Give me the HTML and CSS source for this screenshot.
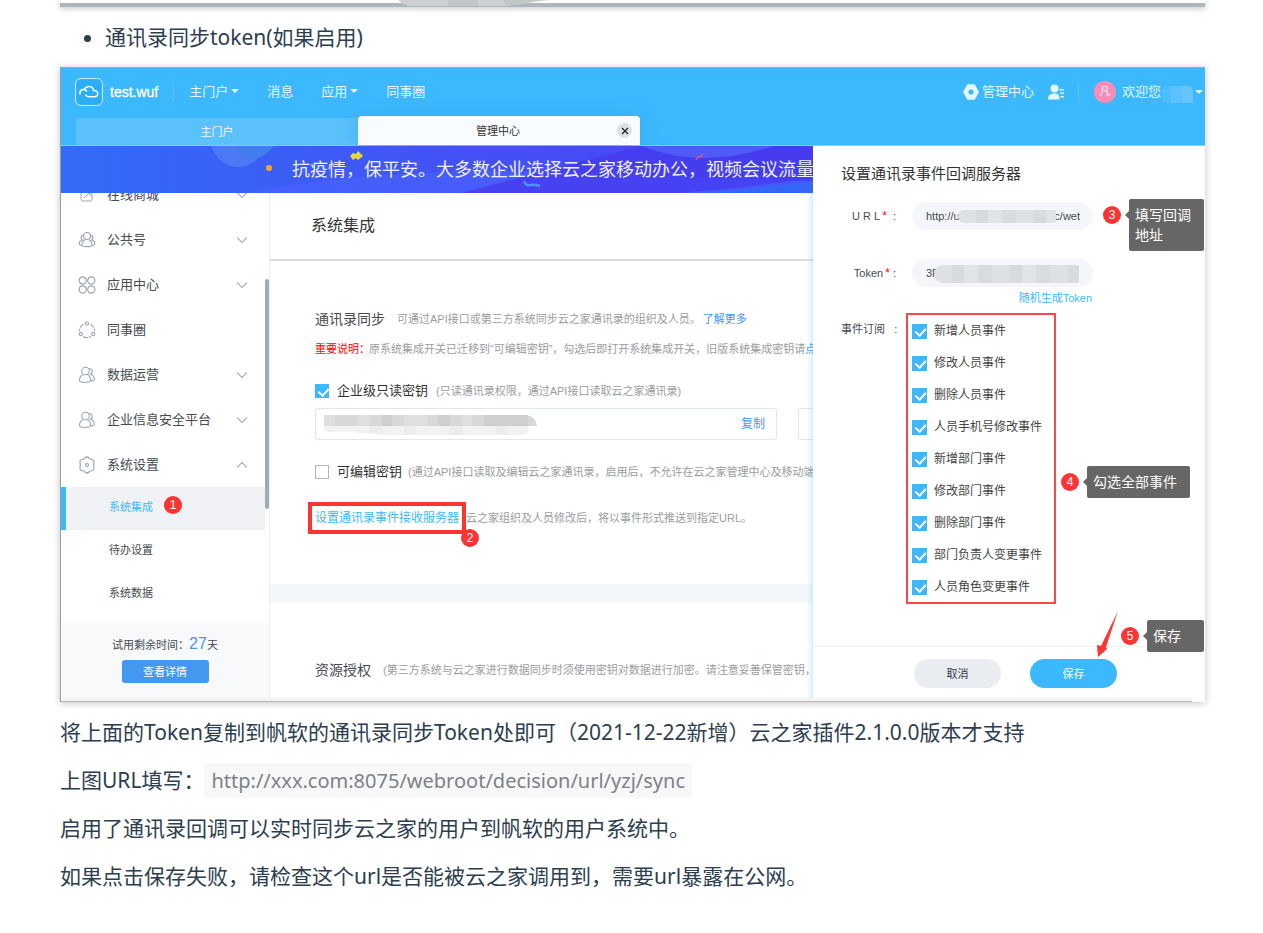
FILE: index.html
```html
<!DOCTYPE html>
<html lang="zh-CN">
<head>
<meta charset="utf-8">
<title>通讯录同步</title>
<link rel="stylesheet" href="styles.css">
</head>
<body>
<svg class="defs" width="0" height="0" aria-hidden="true">
  <symbol id="chevron" viewBox="0 0 12 8"><path d="M1 1.5 6 6.5 11 1.5" fill="none" stroke="#a9b1bb" stroke-width="1.1"/></symbol>
  <symbol id="people2" viewBox="0 0 18 18"><g fill="none" stroke="#9aa5b3" stroke-width="1.1"><circle cx="7.5" cy="5" r="3.8"/><path d="M5.5 8.5C2.500 9.500 1.500 12 1.500 14.500 1.500 16 4 16.300 7 16.300s5.600-.3 5.600-1.800c0-2.500-1-5-3.500-6"/><path d="M11 2.500c3.500-.3 4.500 4 1.500 5.800 2.500.7 3.800 3 3.800 5 0 1.200-1.200 1.500-3.300 1.600"/></g></symbol>
</svg>
<main class="doc">
  <div class="prev-shot">
    <svg class="prev-mosaic" viewBox="0 0 152 7" width="152" height="7" aria-hidden="true"><path d="M0 0Q6 6 14 6H108L151 0Z" fill="#cdd1d3"/><path d="M50 0H80V6H50ZM105 0H140L108 6Z" fill="#c2c6c8"/></svg>
  </div>
  <ul class="points"><li>通讯录同步token(如果启用)</li></ul>

  <section class="shot">
    <header class="top">
      <div class="bar">
        <svg class="logo" viewBox="0 0 28 28" width="28" height="28" aria-hidden="true"><rect x=".6" y=".6" width="26.800" height="26.800" rx="5" fill="#2badf8" stroke="#d4efff"/><path d="M5 16C4 11.500 9 10 11.500 13M9.500 11.500C11 7 18 7.500 18.500 12.500 24 12 24 18.800 19.500 18.800H14.500Q12 18.800 10.500 17" fill="none" stroke="#fff" stroke-width="1.500" stroke-linecap="round"/></svg>
        <strong class="brand">test.wuf</strong>
        <nav class="menu">
          <a class="caret" href="#">主门户</a>
          <a href="#">消息</a>
          <a class="caret" href="#">应用</a>
          <a href="#">同事圈</a>
        </nav>
        <div class="account">
          <a class="admin" href="#"><svg viewBox="0 0 16 16" width="16" height="16" aria-hidden="true"><path d="M4.500.8h7L15.500 8l-4 7.200h-7L.5 8Z" fill="#e4f5ff" stroke="#e4f5ff" stroke-linejoin="round"/><circle cx="8" cy="8" r="2.600" fill="#3cb8ff"/></svg>管理中心</a>
          <svg class="contact" viewBox="0 0 16 16" width="16" height="16" aria-hidden="true"><g fill="#e4f5ff"><circle cx="6.500" cy="4.500" r="4"/><path d="M0 15.500c0-4 2-6 6.500-6s5 2 5 6ZM11.500 5H16v1.500H11.500ZM12 8.500h4V10H12ZM12.500 12h3.500v1.500H12.500Z"/></g></svg>
          <span class="avatar">凡</span>
          <span class="hello">欢迎您</span>
          <span class="masked-name"></span>
        </div>
      </div>
      <div class="tabs">
        <div class="tab">主门户</div>
        <div class="tab active">管理中心<button class="close" type="button" aria-label="关闭"><svg viewBox="0 0 8 8" width="8" height="8" aria-hidden="true"><path d="M1 1 7 7M7 1 1 7" stroke="#222" stroke-width="1.300"/></svg></button></div>
      </div>
    </header>

    <div class="below">
      <div class="left">
        <div class="banner">
          <svg class="banner-art" viewBox="0 0 753 47" width="753" height="47" preserveAspectRatio="xMinYMin slice" aria-hidden="true">
            <path d="M180 47Q330 20 500 26T753 35V47Z" fill="#4a64ff" opacity=".6"/>
            <path d="M400 47Q560 60 753 32V0H580Z" fill="#4638ee" opacity=".7"/>
            <path d="M580 0Q640 24 712 0Z" fill="#4c5cf4"/><path d="M640 47Q700 42 753 35V47Z" fill="#3566f5"/>
            <circle cx="177" cy="-6" r="27" fill="#4c79f5"/><path d="M175 0q18 24 38 0Z" fill="#3f7df0"/>
            <circle cx="208" cy="22" r="3" fill="#f5a52a"/><path d="m289 10 3-3 3 1 2-3 5 5-5 4-2-2-3 2Z" fill="#e5d83b"/>
            <path d="M463 35q2 5 6 4t10 1" fill="none" stroke="#4c93fb" stroke-width="2.500"/><path d="M635 14q1-3 3-3t3-1V8" fill="none" stroke="#ea4e8b" stroke-width="1.500"/>
          </svg>
          <p class="slogan">抗疫情，保平安。大多数企业选择云之家移动办公，视频会议流量</p>
        </div>
        <div class="workspace">
          <aside class="side">
            <nav class="side-nav">
              <a class="row" href="#"><svg class="ico" viewBox="0 0 18 18" width="18" height="18"><rect x="3" y="2" width="11" height="13" rx="1.500" fill="none" stroke="#9aa5b3"/><path d="m6 12 6-6M8 6h4v4" fill="none" stroke="#9aa5b3"/></svg>在线商城<svg class="chev" width="12" height="8"><use href="#chevron"/></svg></a>
              <a class="row" href="#"><svg class="ico" viewBox="0 0 18 18" width="18" height="18"><g fill="none" stroke="#9aa5b3" stroke-width="1.100"><circle cx="9" cy="5" r="3.500"/><path d="M5.500 4C2.500 4 2.500 8 4.500 9 1.500 10 1 12 1.500 13.500c.5 1 2 1 3 1M12.500 4c3 0 3 4 1 5 3 1 3.500 3 3 4.500-.5 1-2 1-3 1M7 9c-2 .8-3 3-3 5.500C4 16 14 16 14 14.500 14 12 13 9.800 11 9"/></g></svg>公共号<svg class="chev" width="12" height="8"><use href="#chevron"/></svg></a>
              <a class="row" href="#"><svg class="ico" viewBox="0 0 18 18" width="18" height="18"><g fill="none" stroke="#9aa5b3" stroke-width="1.200"><circle cx="4.700" cy="4.500" r="3.600"/><circle cx="13.300" cy="4.500" r="3.600"/><circle cx="4.700" cy="13.500" r="3.600"/><circle cx="13.300" cy="13.500" r="3.600"/></g></svg>应用中心<svg class="chev" width="12" height="8"><use href="#chevron"/></svg></a>
              <a class="row" href="#"><svg class="ico" viewBox="0 0 18 18" width="18" height="18"><g fill="none" stroke="#9aa5b3" stroke-width="1.100"><circle cx="9" cy="2.600" r="1.600"/><circle cx="2.800" cy="13" r="1.600"/><circle cx="15.200" cy="13" r="1.600"/><path d="M5.500 3.200Q1.500 5.500 1.500 10M12.500 3.200Q16.500 5.500 16.500 10M5 15.500Q9 17.800 13 15.500" stroke-dasharray="5 1"/></g></svg>同事圈</a>
              <a class="row" href="#"><svg class="ico" width="18" height="18"><use href="#people2"/></svg>数据运营<svg class="chev" width="12" height="8"><use href="#chevron"/></svg></a>
              <a class="row" href="#"><svg class="ico" width="18" height="18"><use href="#people2"/></svg>企业信息安全平台<svg class="chev" width="12" height="8"><use href="#chevron"/></svg></a>
              <a class="row" href="#"><svg class="ico" viewBox="0 0 18 18" width="18" height="18"><g fill="none" stroke="#9aa5b3" stroke-width="1.200"><path d="M7 2q2-2 4 0 1 1.500 3 1.200Q16.500 4 16 6.500q-.5 2.500 0 5 .5 2.500-2 3.300-2-.3-3 1.200-2 2-4 0-1-1.500-3-1.200-2.500-.8-2-3.300.5-2.500 0-5Q1.500 4 4 3.200 6 3.500 7 2Z"/><circle cx="9" cy="9" r="1.500"/></g></svg>系统设置<svg class="chev up" width="12" height="8"><use href="#chevron"/></svg></a>
              <a class="sub current" href="#">系统集成 <span class="num">1</span></a>
              <a class="sub" href="#">待办设置</a>
              <a class="sub" href="#">系统数据</a>
            </nav>
            <div class="trial">
              <p class="trial-text">试用剩余时间：<b>27</b>天</p>
              <button class="detail" type="button">查看详情</button>
            </div>
            <span class="scroll"></span>
          </aside>

          <div class="content">
            <h2 class="title">系统集成</h2>
            <div class="panel">
              <p class="line intro"><span class="heading">通讯录同步</span><span class="note">可通过API接口或第三方系统同步云之家通讯录的组织及人员。</span><a href="#">了解更多</a></p>
              <p class="line warn"><b>重要说明：</b><span class="note">原系统集成开关已迁移到“可编辑密钥”，勾选后即打开系统集成开关，旧版系统集成密钥请</span><a href="#">点</a></p>
              <div class="line key"><label class="check"><input type="checkbox" checked>企业级只读密钥</label><span class="note">(只读通讯录权限，通过API接口读取云之家通讯录)</span></div>
              <div class="keys">
                <div class="keybox">
                  <svg viewBox="0 0 216 22" width="216" height="22" aria-hidden="true"><g opacity=".9"><path d="M2 2H205Q214 4 215 13H2Z" fill="#d4d4d4"/><path d="M1 13H207V18Q205 22 198 22H60L30 19H6Q1 18 1 13Z" fill="#f1f1f1"/><path d="M2 2H13V13H2ZM36 2H48V13H36ZM82 2H105V13H82ZM140 2H150V13H140Z" fill="#dcdcdc"/><path d="M60 2H70V13H60ZM116 2H128V13H116ZM162 2H206V13H162Z" fill="#cacaca"/><path d="M48 13H60V20H48ZM82 13H94V22H82ZM128 13H140V22H128ZM174 13H186V22H174Z" fill="#ebebeb"/></g></svg>
                  <button class="copy" type="button">复制</button>
                </div>
                <div class="keybox next"></div>
              </div>
              <div class="line edit"><label class="check"><input type="checkbox">可编辑密钥</label><span class="note">(通过API接口读取及编辑云之家通讯录，启用后，不允许在云之家管理中心及移动端</span></div>
              <p class="line server"><span class="marked"><a href="#">设置通讯录事件接收服务器</a><span class="num corner">2</span></span><span class="note">云之家组织及人员修改后，将以事件形式推送到指定URL。</span></p>
            </div>
            <div class="panel auth">
              <p class="line intro"><span class="heading">资源授权</span><span class="note">(第三方系统与云之家进行数据同步时须使用密钥对数据进行加密。请注意妥善保管密钥，</span></p>
            </div>
          </div>
        </div>
      </div>

      <form class="drawer">
        <h3>设置通讯录事件回调服务器</h3>
        <div class="field">
          <label for="url">U R L<i>*</i>&nbsp; :</label>
          <div class="pill"><input id="url" type="text" value="http://u&nbsp;&nbsp;&nbsp;&nbsp;&nbsp;&nbsp;&nbsp;&nbsp;&nbsp;&nbsp;&nbsp;&nbsp;&nbsp;&nbsp;&nbsp;&nbsp;&nbsp;&nbsp;&nbsp;&nbsp;&nbsp;&nbsp;&nbsp;&nbsp;&nbsp;&nbsp;&nbsp;&nbsp;&nbsp;&nbsp;&nbsp;c/wet"><span class="mask short"></span></div>
          <div class="callout"><span class="num">3</span><span class="tip">填写回调地址</span></div>
        </div>
        <div class="field token">
          <label for="token">Token<i>*</i> :</label>
          <div class="pill"><input id="token" type="text" value="3F"><span class="mask"></span></div>
        </div>
        <a class="random" href="#">随机生成Token</a>
        <fieldset class="events">
          <legend>事件订阅 &nbsp; :</legend>
          <div class="list">
            <label class="check"><input type="checkbox" checked>新增人员事件</label>
            <label class="check"><input type="checkbox" checked>修改人员事件</label>
            <label class="check"><input type="checkbox" checked>删除人员事件</label>
            <label class="check"><input type="checkbox" checked>人员手机号修改事件</label>
            <label class="check"><input type="checkbox" checked>新增部门事件</label>
            <label class="check"><input type="checkbox" checked>修改部门事件</label>
            <label class="check"><input type="checkbox" checked>删除部门事件</label>
            <label class="check"><input type="checkbox" checked>部门负责人变更事件</label>
            <label class="check"><input type="checkbox" checked>人员角色变更事件</label>
            <div class="callout all"><span class="num">4</span><span class="tip">勾选全部事件</span></div>
          </div>
        </fieldset>
        <div class="actions">
          <button class="cancel" type="button">取消</button>
          <button class="save" type="button">保存</button>
          <svg class="arrow" viewBox="0 0 22 46" width="22" height="46" aria-hidden="true"><path d="M21 0 9 36 10 38 1 46 0 34 4 35Z" fill="#fd3434"/></svg>
          <div class="callout done"><span class="num">5</span><span class="tip">保存</span></div>
        </div>
      </form>
    </div>
    <div class="hscroll"></div>
  </section>

  <p>将上面的Token复制到帆软的通讯录同步Token处即可（2021-12-22新增）云之家插件2.1.0.0版本才支持</p>
  <p>上图URL填写：<code>http://xxx.com:8075/webroot/decision/url/yzj/sync</code></p>
  <p>启用了通讯录回调可以实时同步云之家的用户到帆软的用户系统中。</p>
  <p>如果点击保存失败，请检查这个url是否能被云之家调用到，需要url暴露在公网。</p>
</main>
</body>
</html>
```

FILE: styles.css
```css
* { box-sizing: border-box; }
body { margin: 0; background: #fff; color: #2c3e50; font-family: "Noto Sans", "Noto Sans CJK SC", sans-serif; font-size: 21px; line-height: 36px; }
a { color: inherit; text-decoration: none; }
p, h2, h3 { margin: 0; font-weight: normal; }
button, input { font: inherit; border: 0; padding: 0; }
.defs { position: absolute; }
.doc { padding: 0 58px 0 60px; }
.doc > p { margin-bottom: 12px; }
.prev-shot { height: 7px; padding-left: 338px; border-bottom: 4px solid #adb7be; box-shadow: 0 1px 6px rgba(0, 0, 0, .25); }
.prev-mosaic { display: block; }
.points { margin: 12px 0; padding-left: 45px; }
code { padding: 4px 7px; background: #f8f8f8; color: #7b828a; font-family: "Noto Sans", sans-serif; font-size: 20px; line-height: 20px; }

.shot { margin-bottom: 12px; border-left: 1px solid #9a9fa4; box-shadow: 0 1px 7px rgba(0, 0, 0, .25); font-family: "Liberation Sans", "Noto Sans CJK SC", sans-serif; font-size: 11px; line-height: 20px; color: #444b52; background: #fff; }
.top { display: flex; flex-direction: column; height: 79px; background: #3cb8ff; border-top: 1px solid #62bfe8; border-bottom: 1px solid #7fcffc; color: #e4f5ff; }
.bar { display: flex; align-items: center; height: 48px; padding-left: 14px; font-size: 13px; }
.brand { margin-left: 7px; font-size: 14px; font-weight: normal; color: #fff; -webkit-text-stroke: .3px #fff; }
.menu { display: flex; gap: 28px; margin-left: 15px; padding-left: 15px; border-left: 1px solid #5cc4ff; }
.caret::after { content: ""; display: inline-block; margin-left: 3px; border: 4px solid transparent; border-top-color: #e4f5ff; border-bottom: 0; vertical-align: 3px; }
.account { display: flex; align-items: center; margin-left: auto; }
.admin { display: flex; align-items: center; gap: 3px; }
.contact { margin: 0 15px 0 14px; }
.avatar { position: relative; margin: 0 6px 0 15px; width: 22px; height: 22px; border-radius: 50%; background: #fb8cb5; font-size: 11px; line-height: 21px; text-align: center; }
.avatar::before { content: ""; position: absolute; left: -16px; top: 1px; width: 1px; height: 20px; background: #5cc4ff; }
.masked-name { width: 31px; height: 17px; margin: 5px 2px 0 1px; border-radius: 5px 5px 0 5px; background: linear-gradient(90deg, #4cbdff 30%, #5cc2ff 30% 65%, #65c5ff 65%); }
.account::after { content: ""; margin-right: 2px; border: 4px solid transparent; border-top-color: #e4f5ff; border-bottom: 0; }
.tabs { display: flex; flex: 1; align-items: flex-end; padding-left: 15px; }
.tab { flex: 0 0 282px; height: 27px; border-radius: 4px 0 0 0; background: #5cc1fa; color: #eff9ff; line-height: 28px; text-align: center; }
.tab.active { display: flex; align-items: center; justify-content: flex-end; gap: 97px; height: 29px; padding-right: 8px; border-radius: 4px 4px 0 0; background: #f8fcff; color: #333; line-height: 32px; box-shadow: 0 0 22px #35aef2; }
.close { display: grid; place-items: center; width: 15px; height: 15px; border-radius: 50%; background: #dfe2e4; }

.below { display: flex; height: 552px; }
.left { display: flex; flex: 1; flex-direction: column; min-width: 0; overflow: hidden; }
.banner { position: relative; height: 47px; flex: none; overflow: hidden; background: linear-gradient(90deg, #326cf6, #4451f5 55%, #4545f5); }
.banner-art { position: absolute; inset: 0; width: 100%; }
.slogan { position: relative; padding-left: 231px; color: #eff0ff; font-size: 18px; line-height: 49px; white-space: nowrap; }
.workspace { display: flex; flex: 1; min-height: 0; }
.side { position: relative; display: flex; flex: none; flex-direction: column; width: 209px; border-right: 1px solid #eceef0; }
.side-nav { flex: 1; overflow: hidden; padding-right: 4px; }
.row { display: flex; align-items: center; height: 45px; padding: 0 17px 0 17px; font-size: 13px; }
.row:first-child { margin-top: -21px; }
.ico { margin-right: 11px; }
.chev { margin-left: auto; }
.up { transform: rotate(180deg); }
.sub { display: flex; align-items: center; height: 43px; padding: 0 0 3px 48px; }
.current { padding-left: 43px; border-left: 5px solid #3cb8ff; background: #f0f2f6; color: #3cb8ff; }
.num { display: inline-block; flex: none; width: 18px; height: 18px; border-radius: 50%; background: #fd3434; color: #fff; font-size: 12px; line-height: 18px; text-align: center; }
.current .num { margin: 0 0 4px 11px; }
.trial { height: 75px; padding-top: 9px; background: #f7f9fb; text-align: center; }
.trial-text { line-height: 24px; }
.trial b { font-size: 16px; font-weight: normal; color: #4598f0; }
.detail { width: 87px; height: 23px; margin-top: 3px; border-radius: 3px; background: #4598f0; color: #fff; }
.scroll { position: absolute; right: 0; top: 86px; width: 4px; height: 230px; border-radius: 2px; background: #a0abb9; }

.content { flex: 1; min-width: 0; overflow: hidden; white-space: nowrap; }
.title { height: 68px; padding-left: 41px; border-bottom: 2px solid #dcdddf; color: #333; font-size: 16px; line-height: 65px; }
.panel { height: 342px; padding: 48px 0 0 45px; border-bottom: 19px solid #f4f7fa; }
.line { display: flex; align-items: center; height: 20px; }
.heading { margin-right: 12px; font-size: 14px; }
.note { color: #999da0; }
.line a { color: #4598f0; }
.intro a { margin-left: 2px; }
.warn { margin-top: 10px; }
.warn b { font-weight: normal; color: #f00; }
.warn .note { margin-left: -1px; }
.key { margin-top: 22px; }
.check { display: flex; align-items: center; }
.check input { appearance: none; position: relative; width: 15px; height: 15px; margin: 0 7px 0 0; border: 1px solid #aeb5bd; background: #fff; }
.check input:checked { border-color: #3cb8ff; background: #3cb8ff; }
.check input:checked::after { content: ""; position: absolute; left: 4px; top: 1px; width: 5px; height: 8px; border: solid #fff; border-width: 0 2px 2px 0; transform: rotate(42deg); }
.line .check { margin-right: 8px; color: #333; font-size: 13px; }
.line .check input { width: 14px; height: 14px; margin-right: 8px; }
.keys { display: flex; gap: 21px; margin-top: 7px; }
.keybox { display: flex; flex: none; align-items: center; justify-content: space-between; width: 462px; height: 32px; padding: 0 11px 0 6px; border: 1px solid #dde8f1; border-radius: 3px; }
.copy { background: none; color: #4598f0; font-size: 12px; }
.edit { margin-top: 22px; }
.edit .check { margin-right: 6px; }
.server { margin-top: 26px; }
.marked { position: relative; flex: none; margin: 0 0 0 -7px; padding: 2px 3px; border: 4px solid #fd3434; font-size: 12px; }
.marked a { color: #3cb8ff; }
.corner { position: absolute; right: -17px; bottom: -17px; }
.auth { border: 0; padding-top: 57px; }

.drawer { position: relative; display: flex; flex: none; flex-direction: column; width: 392px; padding-top: 18px; background: #fff; }
.drawer::before { content: ""; position: absolute; left: -6px; top: 47px; bottom: 0; width: 6px; background: linear-gradient(270deg, rgba(60, 184, 255, .22), transparent); }
.drawer h3 { padding-left: 28px; color: #333; font-size: 15px; }
.field { position: relative; display: flex; align-items: center; margin-top: 18px; }
.field label { width: 99px; padding-right: 16px; text-align: right; white-space: nowrap; }
.field i { margin-left: 2px; color: #f00; font-size: 12px; font-style: normal; }
.token { margin-top: 29px; }
.pill { position: relative; flex: none; width: 181px; height: 28px; border-radius: 14px; background: #f4f6fa; }
.pill input { width: 100%; height: 28px; padding: 0 12px 0 14px; background: none; color: #444b52; }
.mask { position: absolute; left: 22px; top: 6px; width: 145px; height: 18px; border-radius: 9px 3px 3px 9px; background: repeating-linear-gradient(90deg, #dde0e4 0 18px, #d7dbdf 18px 30px, #e1e4e7 30px 44px, #d8dbdf 44px 58px); }
.mask.short { left: 46px; top: 8px; width: 98px; height: 13px; }
.random { margin: 1px 113px 0 auto; color: #3cb8ff; }
.events { display: flex; min-width: 0; margin: 5px 0 0; padding: 0; border: 0; }
.events legend { float: left; width: 93px; padding: 6px 0 0 28px; white-space: nowrap; }
.list { position: relative; display: flex; flex-direction: column; justify-content: space-between; width: 150px; height: 291px; padding: 6px 4px 5px; border: 2px solid #fb4848; color: #444; font-size: 12px; }
.callout { position: absolute; left: 290px; top: -3px; display: flex; align-items: flex-start; gap: 8px; }
.callout .num { margin-top: 7px; }
.tip { position: relative; flex: none; width: 75px; padding: 6px; border-radius: 2px; background: #666; color: #fff; font-size: 14px; }
.tip::before { content: ""; position: absolute; left: -4px; top: 12px; border: 4px solid transparent; border-right-color: #666; border-left: 0; }
.all { left: 153px; top: 151px; }
.all .tip { width: 103px; white-space: nowrap; }
.actions { position: relative; display: flex; gap: 29px; height: 52px; margin-top: auto; padding: 12px 0 0 101px; border-top: 1px solid #f0f1f3; }
.actions button { width: 87px; height: 29px; border-radius: 15px; background: #e9edf2; color: #333c50; }
.actions .save { background: #3cb8ff; color: #fff; }
.arrow { position: absolute; left: 284px; top: -36px; }
.done { left: 308px; top: -27px; }
.done .tip { width: 57px; }
.hscroll { height: 4px; margin-right: 13px; border-bottom: 1px solid #b4b8ba; background: #f2f3f4; }
```
